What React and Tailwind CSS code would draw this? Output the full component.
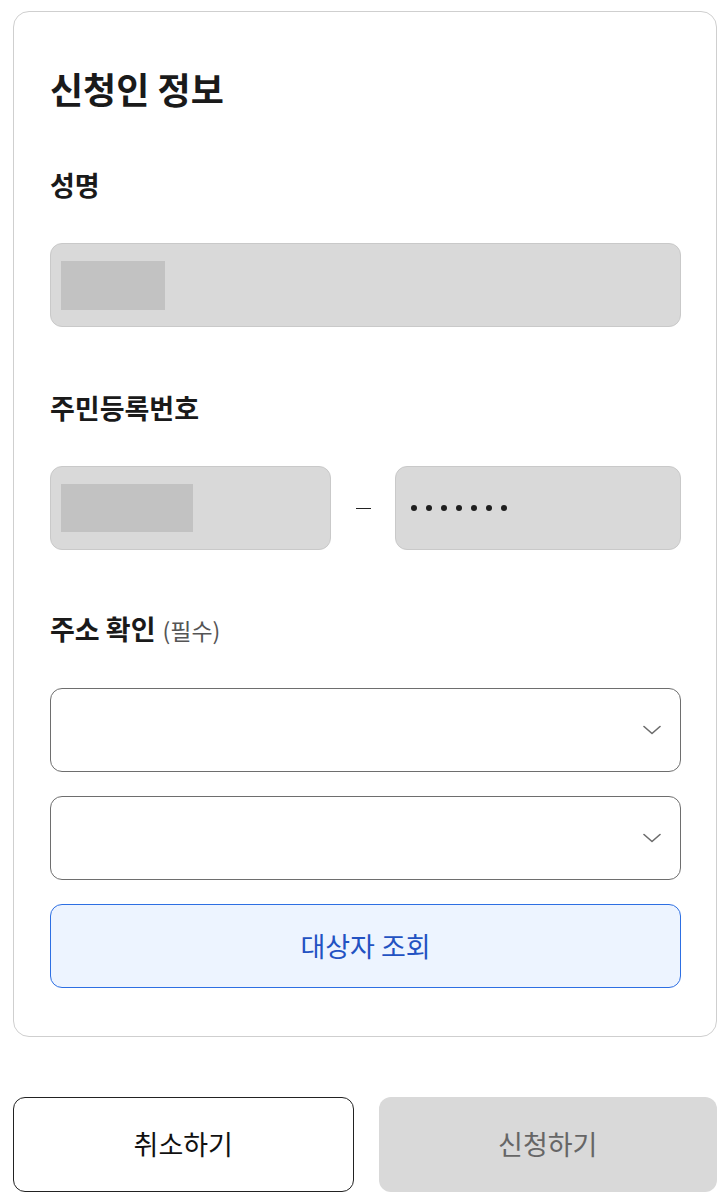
import React from "react";

const font = { fontFamily: '"Noto Sans CJK KR", "Noto Sans", sans-serif' };

function Chevron() {
  return (
    <svg width="18" height="10" viewBox="0 0 18 10" fill="none">
      <path d="M1 1.5 L9 8.5 L17 1.5" stroke="#6b6b6b" strokeWidth="1.6" strokeLinecap="round" strokeLinejoin="round" />
    </svg>
  );
}

function Select() {
  return (
    <div className="h-[84px] rounded-xl border border-[#6e6e6e] bg-white flex items-center justify-end pr-[19px]">
      <Chevron />
    </div>
  );
}

export default function App() {
  return (
    <div className="w-[724px] min-h-[1203px] bg-white text-[#1a1a1a]" style={font}>
      <div className="ml-[13px] mr-[7px] mt-[11px] rounded-2xl border border-[#cfcfcf] pl-9 pr-[35px] pt-[56px] pb-[48px]">
        <h1 className="text-[36px] leading-[40px] font-bold">신청인 정보</h1>

        <div className="mt-[61px] text-[27px] leading-[32px] font-bold">성명</div>
        <div className="mt-[42px] h-[84px] rounded-xl border border-[#c9c9c9] bg-[#d9d9d9] flex items-center pl-[10px]">
          <div className="w-[104px] h-[49px] bg-[#c2c2c2]" />
        </div>

        <div className="mt-[65px] text-[27px] leading-[32px] font-bold">주민등록번호</div>
        <div className="mt-[42px] flex items-center">
          <div className="flex-1 h-[84px] rounded-xl border border-[#c9c9c9] bg-[#d9d9d9] flex items-center pl-[10px]">
            <div className="w-[132px] h-[48px] bg-[#c2c2c2]" />
          </div>
          <div className="w-[64px] flex justify-center">
            <div className="w-[15px] h-px bg-[#222]" />
          </div>
          <div className="flex-1 h-[84px] rounded-xl border border-[#c9c9c9] bg-[#d9d9d9] flex items-center pl-[15px] gap-[9px]">
            {[0, 1, 2, 3, 4, 5, 6].map((i) => (
              <div key={i} className="w-[6px] h-[6px] rounded-full bg-[#1f1f1f]" />
            ))}
          </div>
        </div>

        <div className="mt-[63px] text-[27px] leading-[32px] flex items-baseline">
          <span className="font-bold">주소 확인</span>
          <span className="ml-[7px] text-[23px] text-[#555]">(필수)</span>
        </div>
        <div className="mt-[42px] flex flex-col gap-6">
          <Select />
          <Select />
          <button className="h-[84px] rounded-xl border border-[#2d6fe3] bg-[#edf4ff] text-[27px] text-[#2352c2]">
            대상자 조회
          </button>
        </div>
      </div>

      <div className="ml-[13px] mr-[7px] mt-[60px] flex gap-[25px]">
        <button className="flex-1 h-[95px] rounded-xl border border-[#222] bg-white text-[27px] text-[#111]">
          취소하기
        </button>
        <button className="flex-1 h-[95px] rounded-xl bg-[#d9d9d9] text-[27px] text-[#666]">
          신청하기
        </button>
      </div>
    </div>
  );
}
